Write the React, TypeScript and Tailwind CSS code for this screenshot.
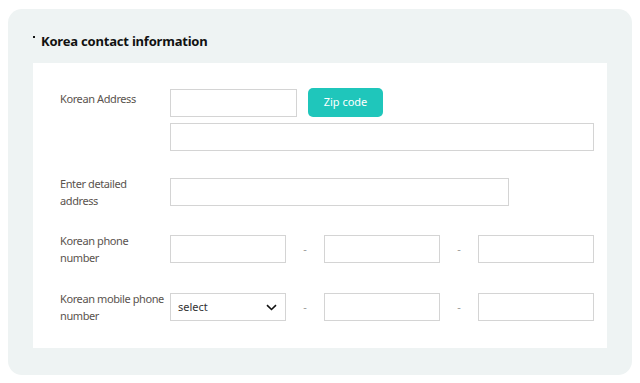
import React from "react";

const inputCls = "h-[28px] border border-[#d4d4d4] bg-white box-border";

function Label({ children }: { children: React.ReactNode }) {
  return (
    <div className="w-[110px] shrink-0 whitespace-nowrap text-[11px] leading-[17px] tracking-[-0.4px] text-[#5a534e]">{children}</div>
  );
}

function Dash() {
  return <div className="w-[38px] shrink-0 text-center text-[11px] text-[#9a9a9a]">-</div>;
}

export default function App() {
  return (
    <div className="w-[640px] h-[383px] bg-white pt-[9px] pl-[8px]" style={{ fontFamily: '"Noto Sans", "Open Sans", sans-serif' }}>
      <div className="w-[624px] h-[366px] rounded-[14px] bg-[#eef3f3] pt-[24px] pl-[25px]">
        <div className="flex items-start h-[30px] text-[#111]">
          <span className="block w-[2px] h-[2px] bg-[#111] mt-[3px] mr-[6px]" />
          <span className="block text-[13px] leading-[16px] font-bold tracking-[-0.2px]">Korea contact information</span>
        </div>
        <div className="w-[574px] h-[285px] bg-white pt-[25px] pl-[27px] pr-[13px] flex flex-col">
          {/* Row 1 */}
          <div className="flex items-start">
            <div className="pt-[2px]"><Label>Korean Address</Label></div>
            <div className="flex flex-col gap-[6px]">
              <div className="flex items-center gap-[11px]">
                <div className={`${inputCls} w-[127px]`} />
                <button className="w-[75px] h-[29px] rounded-[5px] bg-[#1fc6bb] text-white text-[11px]">Zip code</button>
              </div>
              <div className={`${inputCls} w-[424px]`} />
            </div>
          </div>
          {/* Row 2 */}
          <div className="flex items-center mt-[24px]">
            <Label>Enter detailed<br />address</Label>
            <div className={`${inputCls} w-[339px]`} />
          </div>
          {/* Row 3 */}
          <div className="flex items-center mt-[23px]">
            <Label>Korean phone<br />number</Label>
            <div className={`${inputCls} w-[116px]`} />
            <Dash />
            <div className={`${inputCls} w-[116px]`} />
            <Dash />
            <div className={`${inputCls} w-[116px]`} />
          </div>
          {/* Row 4 */}
          <div className="flex items-center mt-[24px]">
            <Label>Korean mobile phone<br />number</Label>
            <div className={`${inputCls} w-[116px] flex items-center justify-between pl-[7px] pr-[8px]`}>
              <span className="text-[11px] text-[#333]">select</span>
              <svg width="11" height="7" viewBox="0 0 11 7" fill="none">
                <path d="M1 1.2 L5.5 5.5 L10 1.2" stroke="#111" strokeWidth="1.6" />
              </svg>
            </div>
            <Dash />
            <div className={`${inputCls} w-[116px]`} />
            <Dash />
            <div className={`${inputCls} w-[116px]`} />
          </div>
        </div>
      </div>
    </div>
  );
}
